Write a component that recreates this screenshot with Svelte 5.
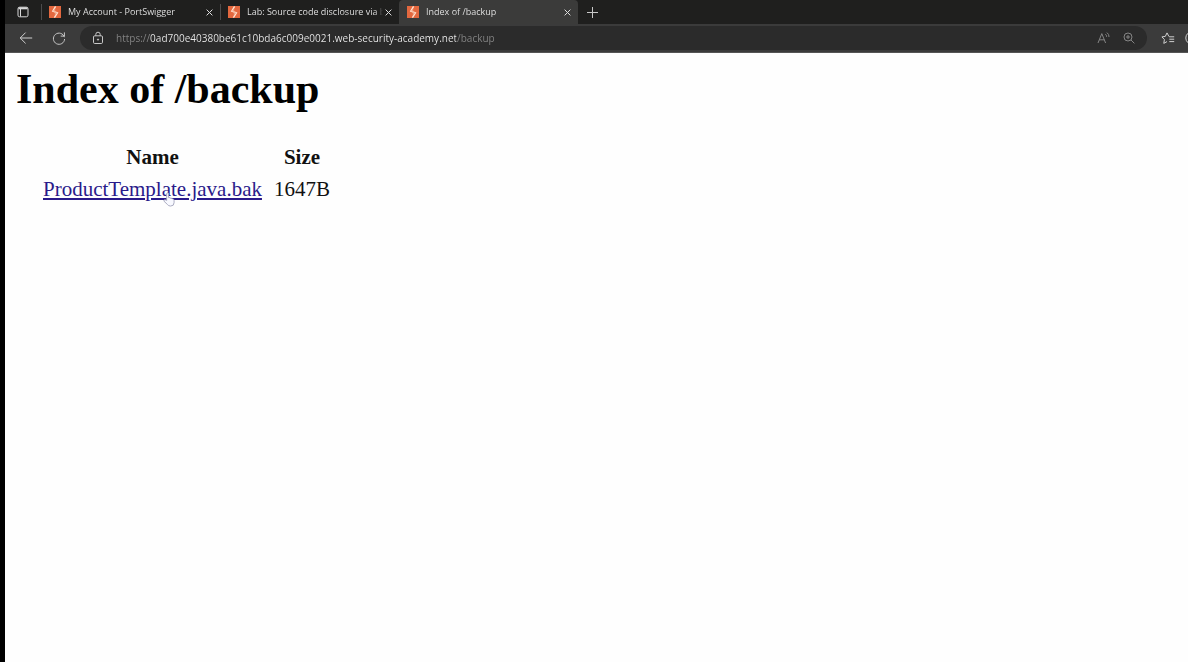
<script>
  const tabs = [
    { title: 'My Account - PortSwigger', active: false },
    { title: 'Lab: Source code disclosure via b', active: false },
    { title: 'Index of /backup', active: true }
  ];
  const files = [{ name: 'ProductTemplate.java.bak', size: '1647B' }];
  let address = $state('https://0ad700e40380be61c10bda6c009e0021.web-security-academy.net/backup');
</script>

<div class="window">
  <header>
    <div class="tabs">
      <button class="icon menu" aria-label="Tab actions menu">
        <svg width="12" height="12" viewBox="0 0 12 12" fill="none" stroke="#d8d8d8">
          <rect x="1" y="1.2" width="10" height="9.6" rx="1.6" />
          <path d="M1.5 2.3h9" stroke-width="2" />
          <path d="M3.5 3v7.5" />
        </svg>
      </button>
      {#each tabs as tab}
        <div class="tab" class:active={tab.active}>
          <svg class="logo" width="12" height="12" viewBox="0 0 12 12">
            <rect width="12" height="12" fill="#e3683f" />
            <path d="M6.6.4 3.8 5.2l4.6 1.6-3 4.8" fill="none" stroke="#ffe3d2" stroke-width="1.4" />
            <path d="M6.2 2.2v3.6L4 5.2zM5.8 6.2v3.6l2.4-3z" fill="#f0a283" />
          </svg>
          <button class="title">{tab.title}</button>
          <button class="icon close" aria-label="Close tab">
            <svg width="7" height="7" viewBox="0 0 7 7" stroke="#dedede"><path d="M.6.6l5.8 5.8M6.4.6.6 6.4" /></svg>
          </button>
        </div>
      {/each}
      <button class="icon add" aria-label="New tab">
        <svg width="11" height="11" viewBox="0 0 11 11" stroke="#c8c8c8"><path d="M5.5 0v11M0 5.5h11" /></svg>
      </button>
    </div>

    <div class="toolbar">
      <button class="icon" aria-label="Back">
        <svg width="14" height="14" viewBox="0 0 14 14" fill="none" stroke="#d0d0d0"><path d="M13.2 7H1.2M6.6 1.6 1.2 7l5.4 5.4" /></svg>
      </button>
      <button class="icon reload" aria-label="Refresh">
        <svg width="14" height="14" viewBox="0 0 14 14" fill="none" stroke="#c8c8c8"><path d="M12.4 6.2A5.6 5.6 0 1 0 12.6 8M12.4 1.4v3.7H8.7" /></svg>
      </button>
      <div class="address">
        <button class="icon" aria-label="View site information">
          <svg width="12" height="14" viewBox="0 0 12 14" fill="none" stroke="#c8c8c8">
            <rect x="1.5" y="4.8" width="9" height="7.7" rx="1.2" />
            <path d="M3.8 4.8V3.4a2.2 2.2 0 0 1 4.4 0v1.4" />
            <circle cx="6" cy="8.6" r=".6" fill="#c8c8c8" />
          </svg>
        </button>
        <input aria-label="Address" spellcheck="false" bind:value={address} />
        <button class="icon" aria-label="Read aloud">
          <svg width="14" height="12" viewBox="0 0 14 12" fill="none" stroke="#858585">
            <path d="M1 11 4.8 1.6 8.6 11M2.3 7.8h5M8.4 2.2q1.3.9 1.2 2.6M9.9.6q2.3 1.6 2.1 4.4" />
          </svg>
        </button>
        <button class="icon" aria-label="Zoom">
          <svg width="12" height="12" viewBox="0 0 12 12" fill="none" stroke="#858585">
            <circle cx="5" cy="5" r="4" /><path d="M8 8l3.4 3.4M5 3v4M3 5h4" />
          </svg>
        </button>
      </div>
      <button class="icon" aria-label="Favorites">
        <svg width="14" height="13" viewBox="0 0 14 13" fill="none" stroke="#cfcfcf">
          <path d="M8.4 4.5 7.9 4.4 6 .9 4.3 4.4.9 4.9l2.5 2.6-.6 3.9L6 9.6M8.3 4.8h4.9M8.3 7.2h4.9M8.3 9.6h4.9" />
        </svg>
      </button>
      <button class="icon profile" aria-label="Profile">
        <svg width="14" height="14" viewBox="0 0 14 14" fill="none" stroke="#cfcfcf"><circle cx="7" cy="7" r="6.2" /></svg>
      </button>
    </div>
  </header>

  <main>
    <h1>Index of /backup</h1>
    <table>
      <thead>
        <tr><th>Name</th><th>Size</th></tr>
      </thead>
      <tbody>
        {#each files as file}
          <tr>
            <td>
              <a href="#{file.name}">{file.name}</a>
              <svg class="pointer" width="12" height="15" viewBox="0 0 13 16" fill="#f8f9ff" stroke="#a3a4bc">
                <path d="M4 9V2q0-1.2 1-1.2T6 2v4q2-.4 2.4.7 1.6-.3 2 .8 1.6-.1 1.6 1.5v2.5q0 3.6-3.8 3.6-2.2 0-3.4-1.7L1 9.8q-.5-1.3.9-1.5Q3 8.2 4 9z" />
              </svg>
            </td>
            <td>{file.size}</td>
          </tr>
        {/each}
      </tbody>
    </table>
  </main>
</div>

<style>
  :global(body) {
    margin: 0;
    background: #fefefe;
  }
  .window {
    box-sizing: border-box;
    min-height: 100vh;
    border-left: 5px solid #000;
    overflow: hidden;
  }
  header {
    font-family: 'Open Sans', 'Noto Sans', sans-serif;
    color: #dedede;
  }
  button {
    padding: 0;
    border: 0;
    background: none;
    color: inherit;
    font: inherit;
  }
  .icon {
    display: flex;
    flex: none;
    align-items: center;
    justify-content: center;
  }
  .tabs {
    display: flex;
    height: 24px;
    background: #1f1f1e;
  }
  .menu {
    width: 36px;
  }
  .tab {
    box-sizing: border-box;
    display: flex;
    align-items: center;
    width: 179px;
    padding: 0 7px;
    border-left: 1px solid transparent;
    font-size: 9px;
    line-height: 12px;
  }
  .tab:not(.active) {
    border-image: linear-gradient(transparent 5px, #4c4c4c 5px 19px, transparent 19px) 1;
    border-width: 0 0 0 1px;
    border-style: solid;
  }
  .tab.active {
    background: #3b3b3a;
    border-radius: 4px 4px 0 0;
  }
  .logo {
    flex: none;
    margin-right: 7px;
  }
  .title {
    flex: 1;
    min-width: 0;
    margin-right: 2px;
    overflow: hidden;
    text-align: left;
    white-space: nowrap;
    mask-image: linear-gradient(to left, transparent, #000 8px);
  }
  .add {
    width: 28px;
  }
  .toolbar {
    box-sizing: border-box;
    display: flex;
    align-items: center;
    gap: 14px;
    height: 29px;
    padding-left: 14px;
    background: #3b3b3b;
    border-bottom: 1px solid #555;
  }
  .reload {
    margin-left: 5px;
  }
  .address {
    display: flex;
    flex: 1;
    align-items: center;
    gap: 12px;
    min-width: 0;
    height: 24px;
    padding: 0 12px;
    border-radius: 12px;
    background: #2b2b2b;
  }
  input {
    flex: 1;
    min-width: 0;
    height: 20px;
    padding: 0;
    border: 0;
    outline: 0;
    background: linear-gradient(to right, #858585 34px, #ededed 34px 340px, #858585 340px);
    background-clip: text;
    color: transparent;
    font: 10px 'Open Sans', 'Noto Sans', sans-serif;
  }
  .profile {
    margin-right: -11px;
    margin-left: -4px;
  }
  main {
    padding: 12px 11px;
    color: #111;
    font: 21px/24px 'Liberation Serif', 'Times New Roman', serif;
  }
  h1 {
    margin: 0 0 26px;
    color: #000;
    font-size: 42px;
    line-height: 48px;
  }
  table {
    margin-left: 19px;
    border-spacing: 4px;
  }
  th,
  td {
    padding: 2px 4px;
  }
  td {
    position: relative;
  }
  a {
    color: #2a1a8a;
  }
  .pointer {
    position: absolute;
    top: 17px;
    left: 124px;
  }
</style>
